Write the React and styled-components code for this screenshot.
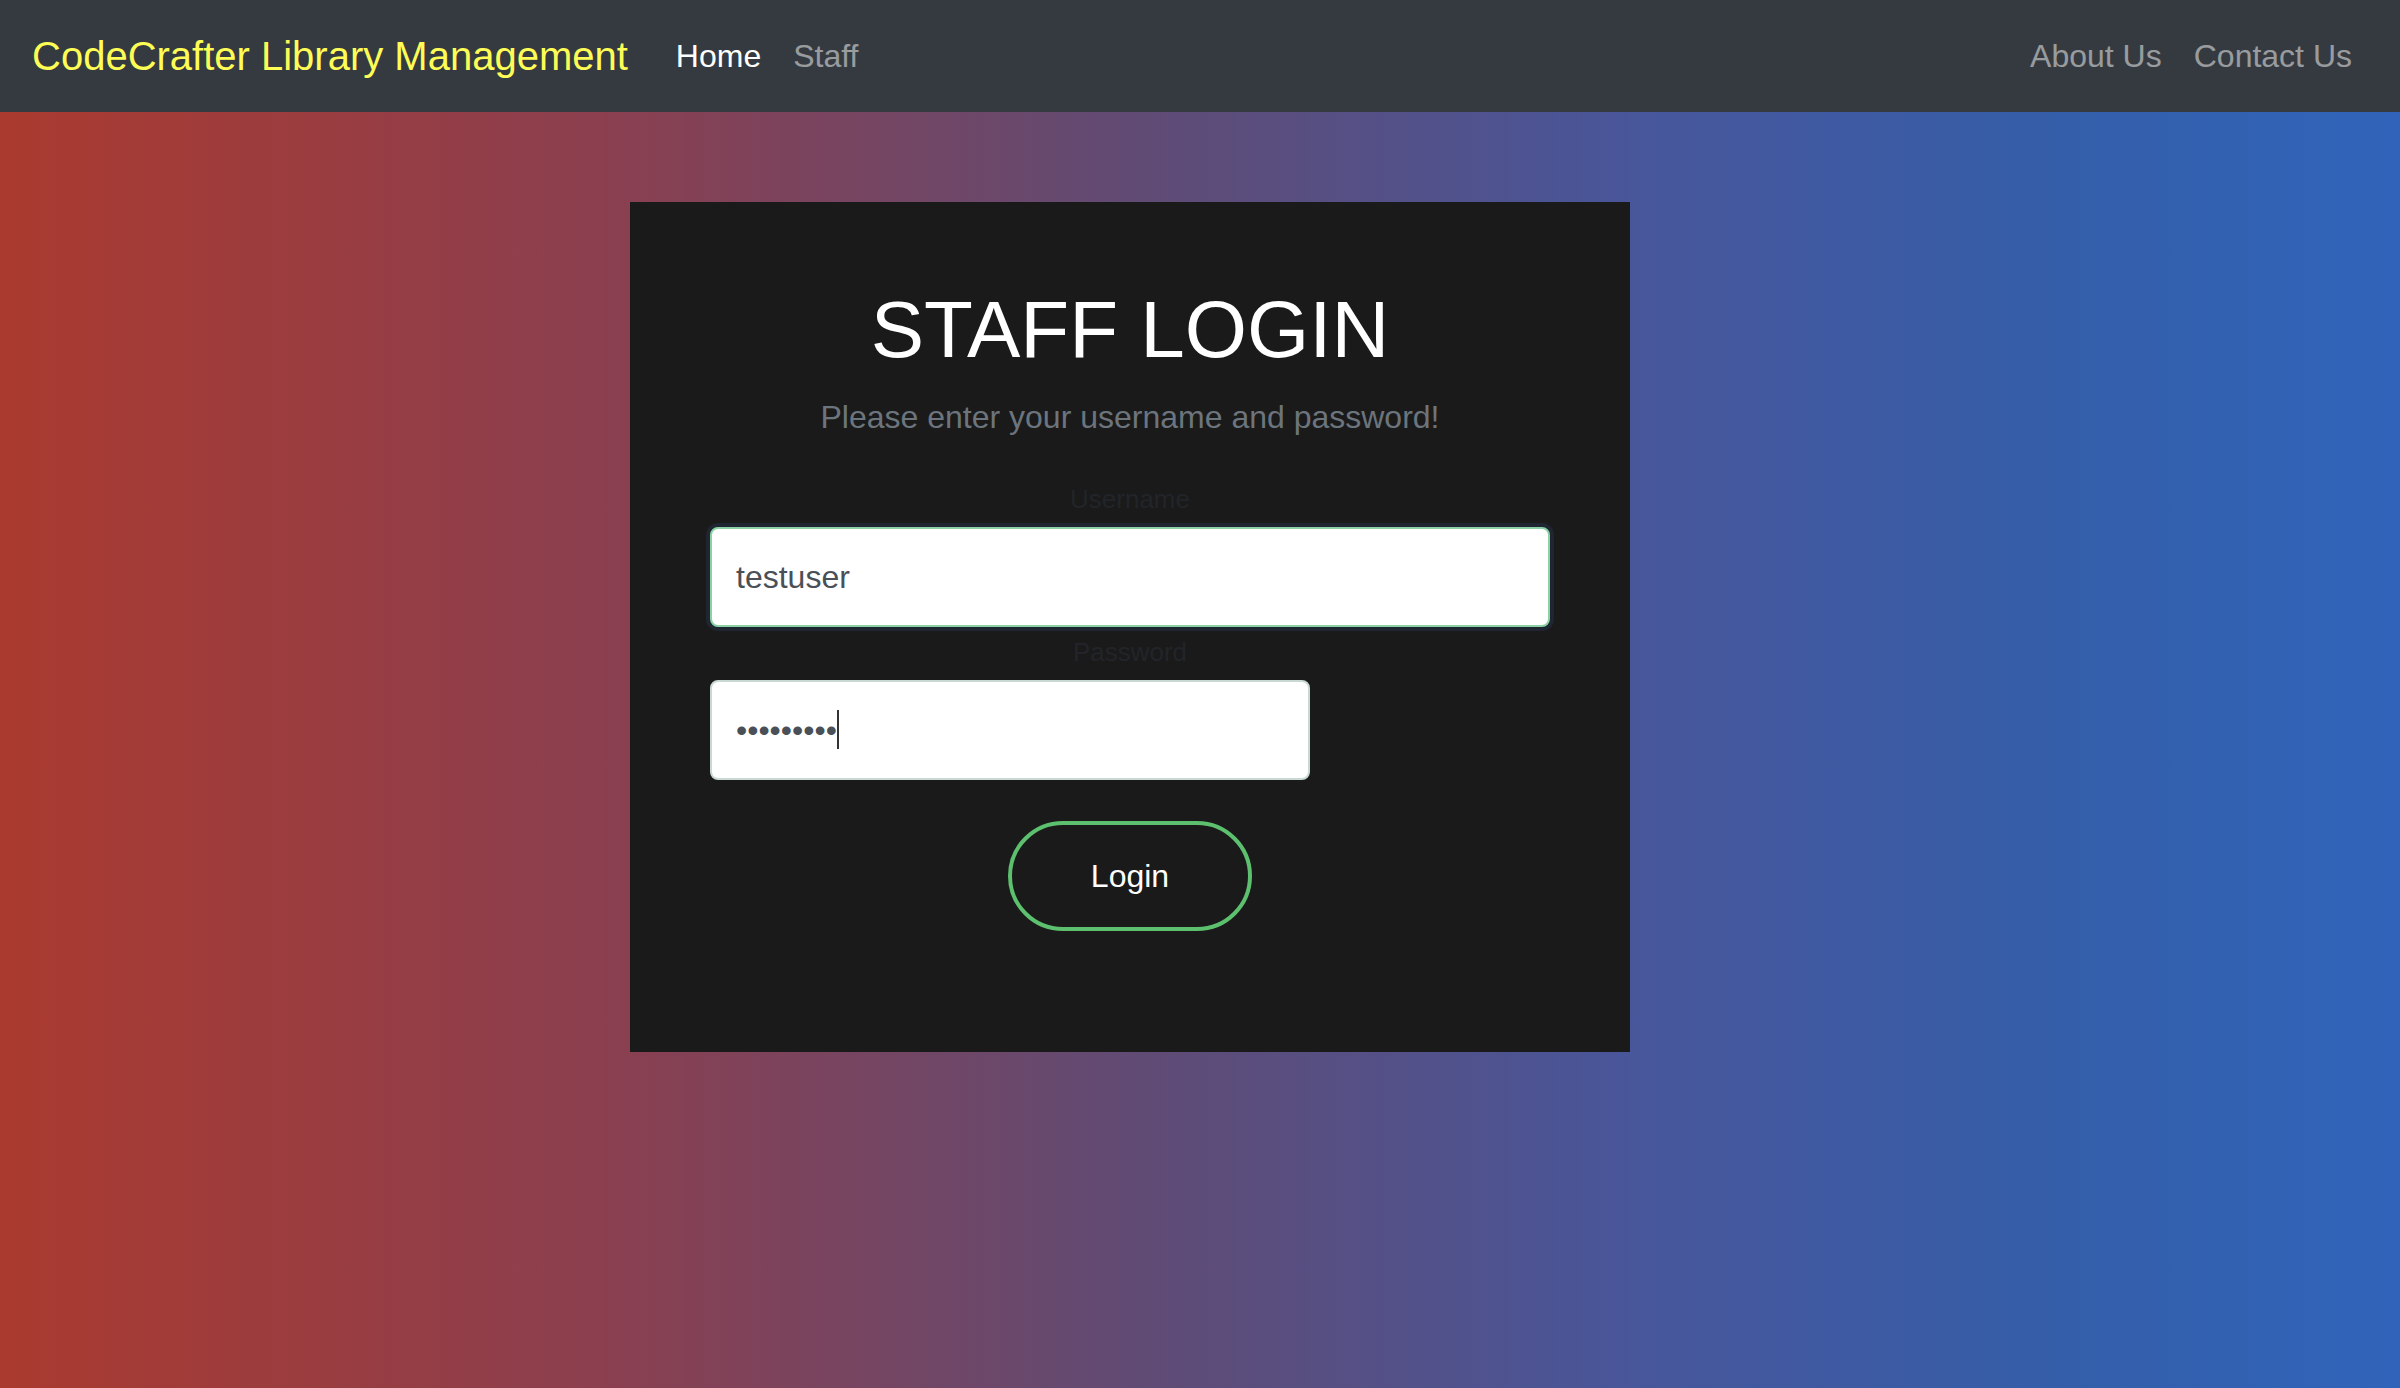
import React from "react";
import styled, { createGlobalStyle } from "styled-components";

const GlobalStyle = createGlobalStyle`
  * { box-sizing: border-box; }
  html, body { margin: 0; padding: 0; }
  body {
    font-family: "Liberation Sans", Arial, Helvetica, sans-serif;
    color: #212529;
  }
`;

const Page = styled.div`
  min-height: 100vh;
  background: linear-gradient(90deg, #aa3a2f 0%, #8b3f4f 25%, #5f4b75 48%, #48569a 68%, #345ea9 86%, #3064ba 100%);
`;

const NavBar = styled.nav`
  display: flex;
  align-items: center;
  height: 112px;
  padding: 16px 32px;
  background: #343a40;
`;

const Brand = styled.a`
  font-size: 40px;
  line-height: 60px;
  padding: 10px 0;
  margin-right: 32px;
  color: #fdfd55;
  text-decoration: none;
  white-space: nowrap;
`;

const NavList = styled.div`
  display: flex;
  align-items: center;
  margin-left: ${(p) => (p.$right ? "auto" : "0")};
`;

const NavLink = styled.a`
  font-size: 32px;
  line-height: 48px;
  padding: 16px 16px;
  color: ${(p) => (p.$active ? "#ffffff" : "rgba(255,255,255,0.5)")};
  text-decoration: none;
  white-space: nowrap;
`;

const Main = styled.main`
  display: flex;
  justify-content: flex-start;
  padding: 90px 0 0 630px;
`;

const Card = styled.section`
  width: 1000px;
  background: #1a1a1a;
  padding: 80px 80px 121px;
  display: flex;
  flex-direction: column;
`;

const Title = styled.h1`
  margin: 0 0 15px;
  font-size: 80px;
  font-weight: 400;
  line-height: 96px;
  color: #ffffff;
  text-align: center;
`;

const Subtitle = styled.p`
  margin: 0 0 39px;
  font-size: 32px;
  line-height: 48px;
  color: #6c757d;
  text-align: center;
`;

const Label = styled.label`
  display: block;
  font-size: 26px;
  line-height: 39px;
  color: #212529;
  text-align: center;
  margin-bottom: 8px;
`;

const Field = styled.div`
  position: relative;
  width: ${(p) => p.$width}px;
  margin-bottom: ${(p) => p.$gap}px;
`;

const Input = styled.input`
  display: block;
  width: 100%;
  height: 100px;
  padding: 0 24px;
  font-family: "Liberation Sans", Arial, Helvetica, sans-serif;
  font-size: 32px;
  color: #495057;
  background: #ffffff;
  border: 2px solid ${(p) => (p.$focused ? "#8ad2a5" : "#c8d8d2")};
  border-radius: 8px;
  outline: none;
  box-shadow: ${(p) => (p.$focused ? "0 0 0 4px #1f2631" : "none")};
`;

const Caret = styled.span`
  position: absolute;
  left: 127px;
  top: 30px;
  width: 2px;
  height: 39px;
  background: #333;
`;

const ButtonRow = styled.div`
  display: flex;
  justify-content: center;
  margin-top: 41px;
`;

const LoginButton = styled.button`
  width: 244px;
  height: 110px;
  border: 4px solid #5cc06e;
  border-radius: 55px;
  background: transparent;
  color: #ffffff;
  font-family: "Liberation Sans", Arial, Helvetica, sans-serif;
  font-size: 32px;
  cursor: pointer;
`;

export default function App() {
  return (
    <>
      <GlobalStyle />
      <Page>
        <NavBar>
          <Brand href="#">CodeCrafter Library Management</Brand>
          <NavList>
            <NavLink href="#" $active>Home</NavLink>
            <NavLink href="#">Staff</NavLink>
          </NavList>
          <NavList $right>
            <NavLink href="#">About Us</NavLink>
            <NavLink href="#">Contact Us</NavLink>
          </NavList>
        </NavBar>
        <Main>
          <Card>
            <Title>STAFF LOGIN</Title>
            <Subtitle>Please enter your username and password!</Subtitle>
            <Label htmlFor="username">Username</Label>
            <Field $width={840} $gap={6}>
              <Input id="username" type="text" defaultValue="testuser" $focused readOnly />
            </Field>
            <Label htmlFor="password">Password</Label>
            <Field $width={600} $gap={0}>
              <Input id="password" type="password" defaultValue="123456789" readOnly />
              <Caret />
            </Field>
            <ButtonRow>
              <LoginButton type="button">Login</LoginButton>
            </ButtonRow>
          </Card>
        </Main>
      </Page>
    </>
  );
}
